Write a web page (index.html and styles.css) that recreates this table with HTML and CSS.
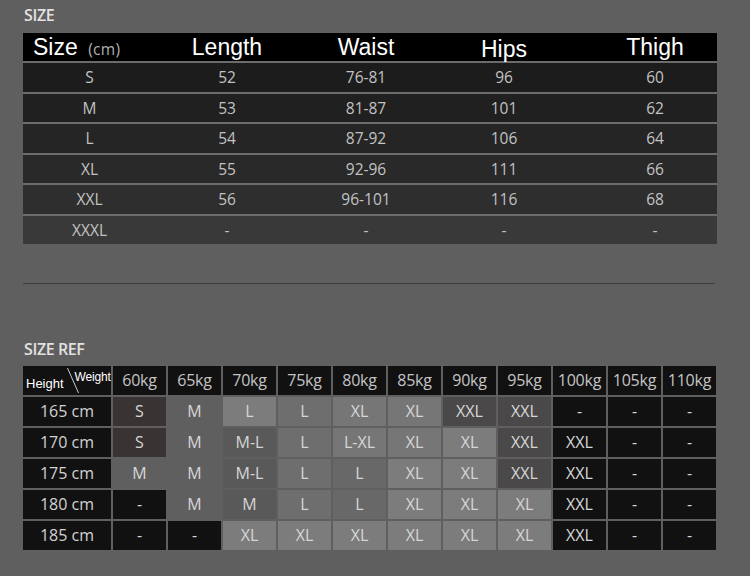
FILE: index.html
```html
<!DOCTYPE html>
<html>
<head>
<meta charset="utf-8">
<link rel="stylesheet" href="styles.css">
</head>
<body>
<div class="page">
  <h2 class="title">SIZE</h2>
  <div class="size-table">
    <div class="srow head">
      <div class="c c1 hsize">Size <span class="unit">(cm)</span></div>
      <div class="c">Length</div>
      <div class="c">Waist</div>
      <div class="c hips">Hips</div>
      <div class="c c5">Thigh</div>
    </div>
    <div class="srow r1"><div class="c">S</div><div class="c">52</div><div class="c">76-81</div><div class="c">96</div><div class="c c5">60</div></div>
    <div class="srow r2"><div class="c">M</div><div class="c">53</div><div class="c">81-87</div><div class="c">101</div><div class="c c5">62</div></div>
    <div class="srow r3"><div class="c">L</div><div class="c">54</div><div class="c">87-92</div><div class="c">106</div><div class="c c5">64</div></div>
    <div class="srow r4"><div class="c">XL</div><div class="c">55</div><div class="c">92-96</div><div class="c">111</div><div class="c c5">66</div></div>
    <div class="srow r5"><div class="c">XXL</div><div class="c">56</div><div class="c">96-101</div><div class="c">116</div><div class="c c5">68</div></div>
    <div class="srow r6"><div class="c">XXXL</div><div class="c">-</div><div class="c">-</div><div class="c">-</div><div class="c c5">-</div></div>
  </div>

  <div class="divider"></div>

  <h2 class="title ref-title">SIZE REF</h2>
  <div class="ref-grid">
    <div class="cell k corner">
      <span class="h-lbl">Height</span><span class="w-lbl">Weight</span>
      <svg class="diag" width="14" height="29" viewBox="0 0 14 29"><line x1="1.5" y1="2" x2="12.5" y2="27" stroke="#c8c8c8" stroke-width="1"/></svg>
    </div>
    <div class="cell k hd">60kg</div><div class="cell k hd">65kg</div><div class="cell k hd">70kg</div><div class="cell k hd">75kg</div><div class="cell k hd">80kg</div><div class="cell k hd">85kg</div><div class="cell k hd">90kg</div><div class="cell k hd">95kg</div><div class="cell k hd">100kg</div><div class="cell k hd">105kg</div><div class="cell k hd">110kg</div>

    <div class="cell k ht">165 cm</div>
    <div class="cell br">S</div><div class="cell bg">M</div><div class="cell g3">L</div><div class="cell g1">L</div><div class="cell g2">XL</div><div class="cell g2">XL</div><div class="cell xx">XXL</div><div class="cell xx">XXL</div><div class="cell k">-</div><div class="cell k">-</div><div class="cell k">-</div>

    <div class="cell k ht">170 cm</div>
    <div class="cell br">S</div><div class="cell bg">M</div><div class="cell dk">M-L</div><div class="cell g1">L</div><div class="cell g2">L-XL</div><div class="cell g2">XL</div><div class="cell g3">XL</div><div class="cell xx">XXL</div><div class="cell k">XXL</div><div class="cell k">-</div><div class="cell k">-</div>

    <div class="cell k ht">175 cm</div>
    <div class="cell bg">M</div><div class="cell bg">M</div><div class="cell dk">M-L</div><div class="cell g1">L</div><div class="cell mid">L</div><div class="cell g3">XL</div><div class="cell g3">XL</div><div class="cell xx">XXL</div><div class="cell k">XXL</div><div class="cell k">-</div><div class="cell k">-</div>

    <div class="cell k ht">180 cm</div>
    <div class="cell k">-</div><div class="cell bg">M</div><div class="cell dk">M</div><div class="cell g1">L</div><div class="cell mid">L</div><div class="cell g3">XL</div><div class="cell g3">XL</div><div class="cell g3">XL</div><div class="cell k">XXL</div><div class="cell k">-</div><div class="cell k">-</div>

    <div class="cell k ht">185 cm</div>
    <div class="cell k">-</div><div class="cell k">-</div><div class="cell g3">XL</div><div class="cell g3">XL</div><div class="cell g3">XL</div><div class="cell g3">XL</div><div class="cell g3">XL</div><div class="cell g3">XL</div><div class="cell k">XXL</div><div class="cell k">-</div><div class="cell k">-</div>
  </div>
</div>
</body>
</html>
```

FILE: styles.css
```css
html, body {
  margin: 0;
  padding: 0;
  background: #605f60;
}
.page {
  width: 750px;
  height: 576px;
  padding: 5px 0 0 23px;
  box-sizing: border-box;
  font-family: "Open Sans", "DejaVu Sans", sans-serif;
}
.title {
  margin: 0 0 8px 1px;
  font-size: 16px;
  font-weight: 600;
  line-height: 20px;
  color: #e2e2e2;
  letter-spacing: -0.4px;
}
.size-table {
  width: 694px;
}
.srow {
  display: grid;
  grid-template-columns: 133px 142px 136px 140px 143px;
  height: 30.5px;
  box-sizing: border-box;
  border-top: 2px solid #6c6c6c;
  color: #c2c2c2;
  font-size: 15.5px;
  line-height: 28.5px;
}
.srow .c {
  text-align: center;
}
.srow .c5 {
  padding-left: 19px;
}
.srow.head {
  height: 28px;
  border-top: none;
  background: #000;
  color: #fff;
  font-family: "Liberation Sans", Arial, sans-serif;
  font-size: 23px;
  line-height: 28px;
}
.srow.head .hsize {
  text-align: left;
  padding-left: 10px;
  white-space: nowrap;
}
.srow.head .hips {
  padding-top: 2px;
}
.unit {
  font-family: "Open Sans", sans-serif;
  font-size: 15.5px;
  color: #b0b0b0;
  margin-left: 4px;
  letter-spacing: 0.3px;
}
.r1 { background: #1c1c1c; }
.r2 { background: #202020; }
.r3 { background: #252525; }
.r4 { background: #292929; }
.r5 { background: #2e2e2e; }
.r6 { background: #393939; }

.divider {
  margin-top: 39px;
  width: 692px;
  height: 1px;
  background: #3e3d3e;
}
.ref-title {
  margin-top: 55px;
  margin-bottom: 7px;
}
.ref-grid {
  display: grid;
  grid-template-columns: 88px repeat(11, 53px);
  grid-auto-rows: 29px;
  gap: 2px;
  font-size: 16px;
  line-height: 29px;
}
.cell {
  text-align: center;
  color: #d6d6d6;
  white-space: nowrap;
}
.cell.hd {
  color: #c4c4c4;
  letter-spacing: -0.2px;
}
.cell.ht {
  color: #d2d2d2;
}
.corner {
  position: relative;
  display: flex;
  font-family: "Liberation Sans", Arial, sans-serif;
  color: #fff;
  text-align: left;
  padding-left: 3px;
}
.h-lbl {
  font-size: 13px;
  line-height: 13px;
  align-self: flex-end;
  margin-bottom: 5px;
}
.w-lbl {
  font-size: 12px;
  line-height: 12px;
  align-self: flex-start;
  margin-top: 5px;
  margin-left: 11px;
  letter-spacing: -0.2px;
}
.diag {
  position: absolute;
  left: 43px;
  top: 0;
}
.k { background: #121112; }
.br { background: #3a3333; }
.bg { background: transparent; }
.dk { background: #5a5959; }
.g1 { background: #6e6e6e; }
.mid { background: #686868; }
.g2 { background: #767676; }
.g3 { background: #7c7c7c; }
.xx { background: #4a4848; }
```
